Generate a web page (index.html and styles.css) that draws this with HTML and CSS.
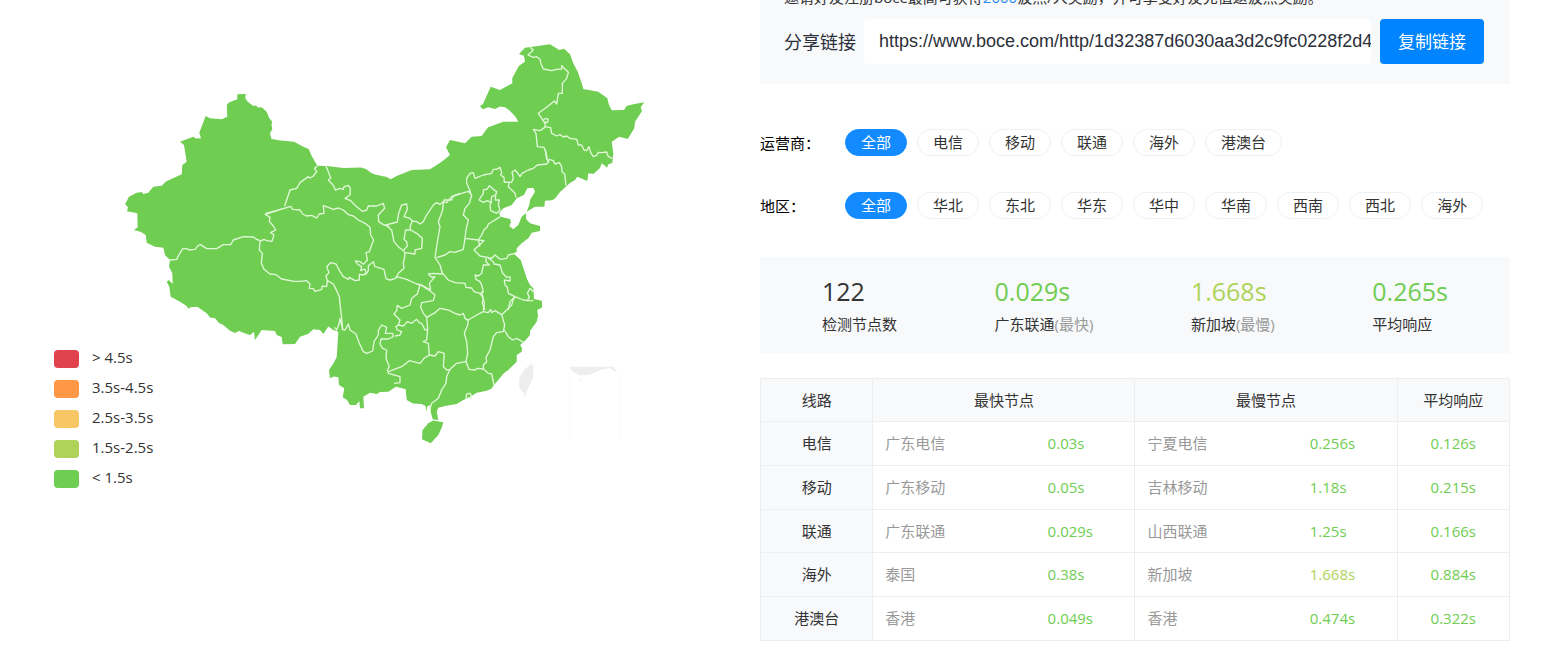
FILE: index.html
```html
<!DOCTYPE html>
<html lang="zh-CN">
<head>
<meta charset="utf-8">
<title>HTTP 检测结果</title>
<link rel="stylesheet" href="styles.css">
</head>
<body>
<main class="page">
  <figure class="map">
    <svg class="map-svg" viewBox="0 0 760 500" role="img" aria-label="全国响应时间地图">
      <path class="land" d="M237.3 94.3L245.7 94L245.3 98.3L247.7 101.7L253.3 106L256 105.5L258 107.5L261.7 107.3L266.7 111.7L269 117.7L272.3 121.7L271.5 125L272.3 129.3L270 133.3L271.3 138.7L278.3 140.3L294 141.7L303.3 146.7L308.7 149L311.7 156L317.3 165.7L326.7 166L343.3 168L361 167.5L366 169L371.7 173.3L375 174.6L386.7 177L390.7 179.3L396.7 176L411.7 170L430 169.3L441.7 161.7L450 155L446 147.3L450 140L465 143.3L471.7 136.7L481.7 136L486 130L488.3 127.3L503.3 121.7L518.3 121.7L515 116L509 110L505 107.3L500 106.5L495 109L488.3 107.3L482.7 109.3L480 106L483 104L490.7 86.7L500 90L512.3 83.3L512.3 78L519 65.7L525 61.7L524 55.7L519 54L525 47.7L532.3 46.7L550 44.3L559.3 50L564 48.7L570 54.3L573.3 63.3L577.7 71.7L581.7 83.3L583.3 89L598.3 91.7L607.3 98.3L609 105L611.7 110.3L624 110L626.7 106L633.3 104.3L644.3 102.3L640.7 107.3L642 111L635 121.7L634.3 128.3L627.7 139L619.3 136.7L611.7 141.7L613.3 153.3L612.3 162.7L608 164.5L607.3 167.7L601.7 163.3L600 168L593.3 174L588.3 173.3L587.3 181L577.3 176.7L575 180L570 183L566.7 186L560 192L555 198.5L552 200.3L545 200.7L544.3 206.7L535 206.7L526.7 211.7L529.3 205L530 200L535 191.7L533.3 187.7L527.3 188.3L524 195L516.7 198.3L511.7 205L503.3 208.3L499 213.3L500.7 216.7L510 219L511 222L509.3 226L513.3 229.3L518.3 225L521.7 216.7L526 213.3L526 219L530 223.3L540 226L540 231L531.7 232.7L528.3 238.3L522 243L516.7 248.3L516.7 252L513.3 253.3L520.7 260L524 270L527 279L530 285L533.3 288.3L534 299L541.7 300.7L542.3 307.3L537.3 310L538 316L536.7 321.7L530 331L530 335L525 340.7L520 345L522 348L521.7 351.7L516.7 355L516.7 361.7L508.3 370L504 373L498.3 380L494 385L491 389L486.7 390.7L476.7 392.7L470 397L463.3 400L456.7 404L445 406L438.3 407.7L436.7 411.7L438.3 420L432.7 419.3L430.7 412L430.7 405L427 406.5L426.5 412L425.5 406L421.7 404L413 403.5L406.7 400L405.7 389.3L396 386.7L388.3 391.7L380 392L377 394L370 392.7L363.3 396.7L364 408.3L360 408.3L359.3 401L356 405L350 405L347 400L342.7 397.3L344.3 388.3L339 385L338.3 377.3L334 376.5L330 378.3L329 370L333 364L336.7 357.3L338.3 331.7L333.3 330L328.3 326.5L323.3 334L320 330L313.3 329.3L308 334L300 336.7L295 344L282.7 344.3L281.7 337L276.7 335L275 331L261.7 330L255 340L254 331.7L250 335L246.7 334L239 331L235 333L230 330.7L223.3 325L219 323L215 318.3L210 317.5L206.7 313.3L197.3 306.7L190 307.3L189 309L186 305.5L180 301.7L170.7 296.7L169.3 286.7L166.7 281.7L169 280L172.7 284L172.3 273.3L169 266.7L170 260L165 255L163.3 247.7L155 246.7L146.7 242.7L145.7 235L141 232L134 230L137.7 227.3L137.3 213.3L130 211.7L127 211.5L128 207L125 204.3L129 196.7L136.7 192.7L142 192L143 194L148.3 192.7L153.3 186.7L161.7 185.7L166 181.5L181.7 174.3L182.3 165L186.7 161.7L184 145L180 141.7L193.3 136.7L196 138.5L201 138.3L199.3 132.7L205.7 116L210 118.3L221.7 119.3L227.3 116.7L226.7 105L229 102.5L237.3 99.3Z"/>
      <path class="land" d="M428.3 423.3L433 420.5L443.3 422.3L442 427L438.3 435L430.7 443.3L422 439.3L422.5 430Z"/>
      <path class="plain" d="M531.7 363.3L533.7 366.7L532.7 378.3L527.3 390L524.7 398.3L524 393.3L519.3 388.3L519.3 378.3L524 370ZM569.3 366.7L613 366.7L617 371L614.5 371.5L610 368L600 370L590 374.5L580 375.5L572 371ZM579 382L583.5 377.5L580 379Z"/>
      <path class="inset" d="M569.5 373V440M619.5 376V438"/>
      <g class="border" transform="translate(110 80) scale(.33333)">
        <path d="M180 540L200 538L206 526L218 506L228 506L240 510L255 508L265 496L272 494L290 506L320 506L340 494L362 494L370 480L400 470L430 471L440 478L450 482M450 484L462 478L470 482L486 484L492 465L482 458L497 450L490 438L478 424L480 412L466 403L542 379M542 379L466 401M622 258L614 265L620 275L610 288L600 294L595 290L570 308L560 325L540 330L524 378"/>
        <path d="M542 379L548 388L570 390L578 402L590 408L605 406L620 414L628 402L642 400L640 377L655 382L670 388L685 384L700 390L715 404L730 408L745 420L765 430L780 442L782 465L791 480L783 500L778 515L768 518L772 540L760 553L750 545L736 543L742 552L755 560L752 572L765 567L768 578L760 585L748 583L748 600L735 602L718 592L715 598L700 590L690 575L678 552L662 548L650 560L657 578L648 588L652 602"/>
        <path d="M450 484L448 510L457 520L454 550L462 568L480 582L498 584L515 597L552 604L570 604L590 602L600 612L598 625L610 626L615 634L635 628L637 618L650 620L652 602L670 612L680 632L688 650L690 670L695 715L698 748M698 748L690 716L686 735L680 750L674 742"/>
        <path d="M648 258L655 275L662 295L655 300L670 316L676 330L690 325L700 328L702 320L715 316L721 325L720 345L705 355L722 362L740 380L757 394L770 390L775 378L800 378L820 370L824 385L805 405L806 425L820 434L838 440"/>
      </g>
      <g class="border" transform="translate(260 150) scale(.33333)">
        <path d="M373 226L412 216L416 190L425 165L440 162L442 178L432 200L450 205L457 213L470 215L480 222L490 215L497 200L520 165L530 158L540 163L550 155L560 158L575 140L600 130"/>
        <path d="M378 226L395 240L402 275L415 290L430 302L442 288L440 275L432 268L437 240L452 240L470 250L487 265L485 295L465 300L465 312L435 308L434 320L430 340L432 355L415 370L408 385M457 213L450 230L452 240M430 302L435 308"/>
        <path d="M316 375L325 362L325 347L340 335L345 350L372 358L378 386L390 390L405 386L410 380L440 388L470 402L485 405M485 405L512 420M550 155L548 180L535 215L540 230L533 270L525 322L540 345L548 372L520 370L505 372L515 382L525 380L508 400L512 420"/>
      </g>
      <g class="border" transform="translate(400 150) scale(.33333)">
        <path d="M130 160L132 150L155 150L160 138L185 130L205 124L212 128L208 118L200 100L200 85L210 70L220 68L225 85L250 75L275 70L280 58L290 58L300 52L305 68L302 75L312 82L313 97L335 97L340 85L336 66L345 60L355 72L360 80L366 70L385 60L400 55L412 45L440 42L446 35L440 28L436 0"/>
        <path d="M205 124L215 135L208 160L195 175L190 195L205 210L198 240L195 265L235 270L252 272L238 285L222 300L240 318L262 322M110 323L135 315L150 305L165 307L190 298L195 265"/>
        <path d="M268 107L262 117L250 120L250 130L237 150L250 157L262 152L273 158L275 140L287 135L290 125L280 118ZM287 135L286 150L298 150L295 165L300 180L290 190L272 182L270 165L275 155M313 97L328 97L325 110L345 130L348 142M443 38L447 28L460 32L465 42L478 38L485 50L486 65L494 72L498 107"/>
        <path d="M300 200L288 208L265 222L262 230L252 240L245 255L235 270L240 290M258 322L258 335L268 345L250 345L245 370L235 378L225 375L228 388L240 395L245 405L250 425L238 432M262 322L275 325L285 315L300 328L320 325L325 315L345 310M262 322L280 335L282 342L300 345L308 370L320 382L330 380L330 393L313 390L315 405L322 412L325 430L345 440L370 450L382 452L400 452M382 452L388 440L382 430L390 415L400 425M345 440L330 455L325 480"/>
        <path d="M128 370L145 390L165 398L195 400L198 412L215 414L222 425L240 430L250 445L247 460L255 480"/>
      </g>
      <g class="border" transform="translate(400 30) scale(.33333)">
        <path d="M390 52L400 60L384 75L400 82L410 80L420 88L422 98L430 117L455 122L470 118L485 117L485 107L505 127L500 145L487 160L487 190L475 190L470 222L463 213L440 232L415 250L425 265L435 280L435 292L420 302L400 298L408 310L412 350L432 352L438 368L442 388M430 270L437 265L445 268L442 278L432 276Z"/>
        <path d="M435 290L452 293L455 310L470 318L480 314L490 321L500 318L510 325L530 328L535 345L545 345L552 360L560 362L567 350L572 368L580 380L590 376L595 367L605 368L620 366L625 380L637 385"/>
      </g>
      <g class="border" transform="translate(320 270) scale(.33333)">
        <path d="M65 178L75 180L85 162L90 180L108 192L118 220L130 245L140 250L158 243L162 215L175 195L175 182L185 165L200 172L196 190L218 190L220 200L205 207L183 207L180 222L188 235L200 240L198 265L208 290L202 300L205 310L240 320L240 338L222 340"/>
        <path d="M300 45L292 72L275 85L270 105L245 115L232 106L230 122L222 132L240 150L235 165L228 170L232 180L245 185L240 195L225 198M235 165L250 168L262 155L275 160L290 148L298 158L305 160L315 180L322 178"/>
        <path d="M298 42L318 55L330 62L345 75L340 92L305 98L302 112L310 130L320 142L345 128L360 115L385 120L405 130L420 135L430 130L435 145L445 150L470 135L490 125L505 128L512 118L515 128L525 122L545 134L560 120L575 105L580 88L585 80"/>
        <path d="M320 142L323 178L320 210L310 215L325 220L328 255L312 265L300 280L268 272L245 290L205 305M328 255L345 258L355 245L373 250L370 290L380 300L390 298L410 280L438 275L447 298L465 300L472 295L490 297L505 310L515 312L522 345"/>
        <path d="M435 145L445 153L443 165L433 190L440 215L443 250L438 275M490 297L490 285L500 275L498 262L510 240L520 200L530 188L550 185L554 165L545 134M553 180L565 200L578 210L590 205L612 218M390 298L380 320L378 340L365 360L355 385L335 400L332 410M485 65L493 100L490 122M440 372L450 370L455 378L450 385L438 384Z"/>
      </g>
    </svg>
    <figcaption>
      <ul class="legend">
        <li><span class="swatch red"></span>&gt; 4.5s</li>
        <li><span class="swatch orange"></span>3.5s-4.5s</li>
        <li><span class="swatch yellow"></span>2.5s-3.5s</li>
        <li><span class="swatch lime"></span>1.5s-2.5s</li>
        <li><span class="swatch green"></span>&lt; 1.5s</li>
      </ul>
    </figcaption>
  </figure>

  <div class="result">
    <section class="share">
      <p class="share-tip">邀请好友注册boce最高可获得<span class="points">2000</span>波点/人奖励，并可享受好友充值返波点奖励。</p>
      <div class="share-row">
        <label for="share-link">分享链接</label>
        <input id="share-link" type="text" readonly value="https://www.boce.com/http/1d32387d6030aa3d2c9fc0228f2d4">
        <button type="button" class="copy">复制链接</button>
      </div>
    </section>

    <section class="filters">
      <div class="filter" role="group" aria-labelledby="isp">
        <span class="filter-label" id="isp">运营商：</span>
        <button type="button" class="pill active">全部</button>
        <button type="button" class="pill">电信</button>
        <button type="button" class="pill">移动</button>
        <button type="button" class="pill">联通</button>
        <button type="button" class="pill">海外</button>
        <button type="button" class="pill">港澳台</button>
      </div>
      <div class="filter" role="group" aria-labelledby="area">
        <span class="filter-label" id="area">地区：</span>
        <button type="button" class="pill active">全部</button>
        <button type="button" class="pill">华北</button>
        <button type="button" class="pill">东北</button>
        <button type="button" class="pill">华东</button>
        <button type="button" class="pill">华中</button>
        <button type="button" class="pill">华南</button>
        <button type="button" class="pill">西南</button>
        <button type="button" class="pill">西北</button>
        <button type="button" class="pill">海外</button>
      </div>
    </section>

    <section class="stats">
      <div class="stat"><strong>122</strong><span>检测节点数</span></div>
      <div class="stat"><strong class="fast">0.029s</strong><span>广东联通<em>(最快)</em></span></div>
      <div class="stat"><strong class="mid">1.668s</strong><span>新加坡<em>(最慢)</em></span></div>
      <div class="stat"><strong class="fast">0.265s</strong><span>平均响应</span></div>
    </section>

    <table class="lines">
      <colgroup><col class="c-line"><col class="c-name"><col class="c-time"><col class="c-name"><col class="c-time"><col class="c-avg"></colgroup>
      <thead>
        <tr><th scope="col">线路</th><th scope="col" colspan="2">最快节点</th><th scope="col" colspan="2">最慢节点</th><th scope="col">平均响应</th></tr>
      </thead>
      <tbody>
        <tr><th scope="row">电信</th><td class="name">广东电信</td><td class="time">0.03s</td><td class="name">宁夏电信</td><td class="time">0.256s</td><td class="avg">0.126s</td></tr>
        <tr><th scope="row">移动</th><td class="name">广东移动</td><td class="time">0.05s</td><td class="name">吉林移动</td><td class="time">1.18s</td><td class="avg">0.215s</td></tr>
        <tr><th scope="row">联通</th><td class="name">广东联通</td><td class="time">0.029s</td><td class="name">山西联通</td><td class="time">1.25s</td><td class="avg">0.166s</td></tr>
        <tr><th scope="row">海外</th><td class="name">泰国</td><td class="time">0.38s</td><td class="name">新加坡</td><td class="time mid">1.668s</td><td class="avg">0.884s</td></tr>
        <tr><th scope="row">港澳台</th><td class="name">香港</td><td class="time">0.049s</td><td class="name">香港</td><td class="time">0.474s</td><td class="avg">0.322s</td></tr>
      </tbody>
    </table>
  </div>
</main>
</body>
</html>
```

FILE: styles.css
```css
* { box-sizing: border-box; }

body {
  margin: 0;
  background: #fff;
  color: #333;
  font: 15px/20px "Open Sans", "Noto Sans CJK SC", sans-serif;
  overflow-x: hidden;
}

button, input { font: inherit; margin: 0; }

.page {
  display: grid;
  grid-template-columns: minmax(0, 76fr) minmax(0, 75fr);
  padding-right: 46px;
  overflow: hidden;
}

/* Map */
.map { position: relative; margin: 0; }
.map-svg { display: block; width: 100%; height: auto; }
.land { fill: #6fcd51; }
.plain { fill: #eee; }
.inset { fill: none; stroke: #fbfbfb; }
.border {
  fill: none;
  stroke: #e0f8d8;
  stroke-width: 4;
  stroke-linejoin: round;
}

.legend {
  position: absolute;
  left: 54px;
  top: 346px;
  display: grid;
  gap: 8px;
  margin: 0;
  padding: 0;
  list-style: none;
}
.legend li { display: flex; align-items: center; gap: 13px; line-height: 22px; }
.swatch { width: 25px; height: 18px; margin-top: 4px; border-radius: 4px; }
.red { background: #e0434d; }
.orange { background: #ff9744; }
.yellow { background: #f7c766; }
.lime { background: #aed358; }
.green { background: #6fcd51; }

/* Share link */
.share {
  margin-top: -15px;
  padding: 0 26px 20px 24px;
  background: #f8f9fb;
}
.share-tip { margin: 0 0 10px; line-height: 24px; white-space: nowrap; }
.points { color: #2f8eed; }
.share-row { display: flex; align-items: center; font-size: 18px; }
.share-row label { margin-right: 8px; color: #2b2f3a; }
.share-row input {
  flex: 1;
  min-width: 0;
  height: 45px;
  padding: 0 0 0 15px;
  border: 0;
  border-radius: 4px;
  background: #fff;
  color: #2b2f3a;
  font-family: "Liberation Sans", Arial, sans-serif;
}
.copy {
  width: 104px;
  height: 45px;
  margin-left: 9px;
  padding: 0;
  border: 0;
  border-radius: 4px;
  background: #0084ff;
  color: #fff;
  font-size: 17px;
}

/* Filters */
.filters { display: grid; gap: 36px; padding: 45px 0 38px; }
.filter { display: flex; align-items: center; gap: 10px; }
.filter-label { width: 75px; color: #000; }
.pill {
  height: 27px;
  padding: 0 15px;
  border: 1px solid #eef0f2;
  border-radius: 14px;
  background: #fff;
  color: #333;
  line-height: 25px;
  white-space: nowrap;
}
.pill.active { border-color: #138bff; background: #138bff; color: #fff; }

/* Summary */
.stats {
  display: flex;
  justify-content: space-between;
  margin-bottom: 25px;
  padding: 17px 62px 19px;
  background: #f8f9fb;
}
.stat { display: grid; gap: 6px; }
.stat strong { font-size: 25px; font-weight: 400; line-height: 34px; }
.stat em { color: #999; font-style: normal; }
.stat .fast { color: #6fcd51; }
.stat .mid { color: #aed358; }

/* Line table */
.lines {
  width: 100%;
  border: 1px solid #eceef0;
  border-collapse: collapse;
  table-layout: fixed;
}
.lines tr { height: 44px; }
.lines thead tr, .lines tr:nth-child(3) { height: 43px; }
.c-line { width: 15%; }
.c-name { width: 22%; }
.c-time { width: 13%; }
.c-avg { width: 15%; }
.lines th, .lines td { padding: 0 0 1px; border: 1px solid #eceef0; }
.lines th { background: #f8f9fb; font-weight: 400; }
.lines .name { padding-left: 12px; border-right: 0; color: #999; }
.lines .time { padding-left: 10px; border-left: 0; color: #6fcd51; }
.lines .time.mid { color: #aed358; }
.lines .avg { color: #6fcd51; text-align: center; }
```
